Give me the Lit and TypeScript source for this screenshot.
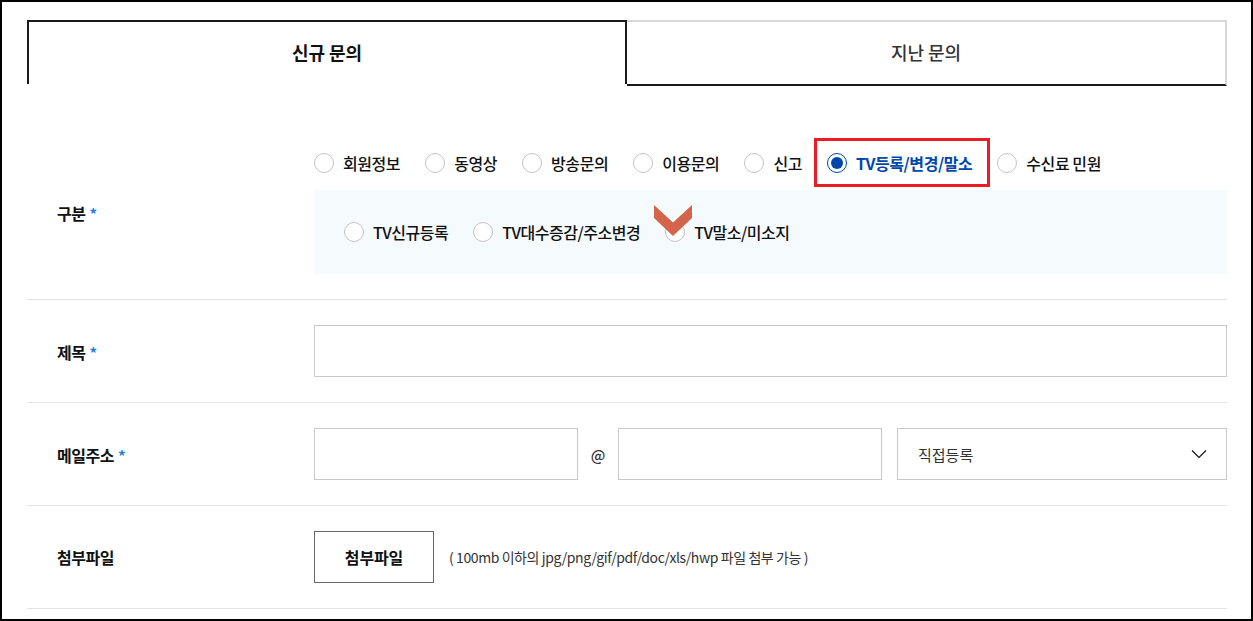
import { LitElement, html, css } from "lit";
import { customElement } from "lit/decorators.js";

@customElement("app-root")
export class AppRoot extends LitElement {
  static styles = css`
    :host {
      display: block;
      width: 1253px;
      height: 621px;
      overflow: hidden;
      font-family: "Noto Sans CJK KR", "Noto Sans", sans-serif;
      color: #111;
    }
    .page {
      box-sizing: border-box;
      width: 1253px;
      height: 621px;
      border: 2px solid #000;
      padding: 18px 24px 0 25px;
      background: #fff;
      overflow: hidden;
    }
    .tabs {
      display: flex;
      height: 66px;
      margin-bottom: 67px;
    }
    .tab {
      box-sizing: border-box;
      width: 600px;
      display: flex;
      align-items: center;
      justify-content: center;
      font-size: 18px;
      letter-spacing: -0.1px;
    }
    .tab.on {
      border: 2px solid #1a1a1a;
      border-bottom: 0;
      font-weight: 700;
      height: 64px;
      padding-bottom: 3px;
    }
    .tab.off {
      border-top: 2px solid #d8d8d8;
      border-right: 2px solid #d8d8d8;
      border-bottom: 2px solid #1a1a1a;
      font-weight: 500;
      color: #333;
      padding-bottom: 2px;
    }
    .row {
      display: grid;
      grid-template-columns: 287px 913px;
      align-items: center;
      border-bottom: 1px solid #e5e5e5;
      padding: 25px 0;
    }
    .row.first {
      padding-top: 0;
    }
    .label {
      padding: 2px 0 0 30px;
      font-size: 16px;
      font-weight: 700;
      letter-spacing: -0.5px;
      line-height: 22px;
    }
    .row.first .label,
    .row.last .label {
      padding-top: 0;
    }
    .star {
      color: #1e80e0;
      font-size: 15px;
      margin-left: 1px;
    }
    .field {
      position: relative;
    }
    .radios {
      display: flex;
      align-items: center;
      gap: 25px;
      height: 20px;
    }
    .radio {
      display: flex;
      align-items: center;
      gap: 9px;
      font-size: 16px;
      font-weight: 500;
      line-height: 20px;
      letter-spacing: -0.43px;
      white-space: nowrap;
    }
    .panel .radio {
      letter-spacing: -0.48px;
    }
    .dot {
      box-sizing: border-box;
      width: 20px;
      height: 20px;
      border: 1px solid #c4c4c4;
      border-radius: 50%;
      background: #fff;
      flex: none;
    }
    .radio.sel {
      color: #0047ab;
      font-weight: 700;
    }
    .radio.sel .dot {
      border-color: #0047ab;
      padding: 3px;
    }
    .radio.sel .dot::after {
      content: "";
      display: block;
      width: 12px;
      height: 12px;
      border-radius: 50%;
      background: #0047ab;
    }
    .panel {
      position: relative;
      margin-top: 17px;
      height: 84px;
      padding-left: 30px;
      background: #f5fafd;
      display: flex;
      align-items: center;
    }
    .panel .radios {
      margin-top: -1px;
    }
    .redbox {
      position: absolute;
      left: 500px;
      top: -15px;
      width: 176px;
      height: 49px;
      box-sizing: border-box;
      border: 3px solid #ed1c24;
    }
    .chevron {
      position: absolute;
      left: 340px;
      top: 15px;
      width: 38px;
      height: 31px;
      display: block;
    }
    .input {
      box-sizing: border-box;
      height: 52px;
      border: 1px solid #c8c8c8;
      background: #fff;
    }
    .mail {
      display: flex;
      align-items: center;
    }
    .mail .input {
      width: 264px;
    }
    .at {
      width: 40px;
      text-align: center;
      font-size: 15px;
      color: #333;
      font-weight: 500;
    }
    .select {
      box-sizing: border-box;
      width: 330px;
      height: 52px;
      margin-left: 15px;
      border: 1px solid #c8c8c8;
      display: flex;
      align-items: center;
      justify-content: space-between;
      padding: 0 19px 0 20px;
      font-size: 15px;
      color: #333;
    }
    .select svg {
      display: block;
      width: 16px;
      height: 10px;
    }
    .file {
      display: flex;
      align-items: center;
    }
    .btn {
      box-sizing: border-box;
      width: 120px;
      height: 52px;
      border: 1px solid #666;
      display: flex;
      align-items: center;
      justify-content: center;
      font-size: 16px;
      font-weight: 700;
      letter-spacing: -0.15px;
    }
    .hint {
      margin-left: 15px;
      font-size: 14px;
      letter-spacing: -0.41px;
      color: #333;
    }
  `;

  private radio(text: string, sel = false) {
    return html`<div class="radio ${sel ? "sel" : ""}"><span class="dot"></span>${text}</div>`;
  }

  render() {
    return html`
      <div class="page">
        <div class="tabs">
          <div class="tab on">신규 문의</div>
          <div class="tab off">지난 문의</div>
        </div>
        <div class="row first">
          <div class="label">구분 <span class="star">*</span></div>
          <div class="field">
            <div class="radios">
              ${this.radio("회원정보")} ${this.radio("동영상")} ${this.radio("방송문의")}
              ${this.radio("이용문의")} ${this.radio("신고")}
              ${this.radio("TV등록/변경/말소", true)} ${this.radio("수신료 민원")}
            </div>
            <div class="redbox"></div>
            <div class="panel">
              <div class="radios">
                ${this.radio("TV신규등록")} ${this.radio("TV대수증감/주소변경")}
                ${this.radio("TV말소/미소지")}
              </div>
              <svg class="chevron" viewBox="0 0 38 31">
                <path d="M0 0 L19 17.5 L38 0 V13 L19 31 L0 13 Z" fill="#d4654a" />
              </svg>
            </div>
          </div>
        </div>
        <div class="row">
          <div class="label">제목 <span class="star">*</span></div>
          <div class="input"></div>
        </div>
        <div class="row">
          <div class="label">메일주소 <span class="star">*</span></div>
          <div class="mail">
            <div class="input"></div>
            <div class="at">@</div>
            <div class="input"></div>
            <div class="select">
              직접등록
              <svg viewBox="0 0 16 10"><path d="M1 1.5 L8 8.5 L15 1.5" fill="none" stroke="#111" stroke-width="1.2" /></svg>
            </div>
          </div>
        </div>
        <div class="row last">
          <div class="label">첨부파일</div>
          <div class="file">
            <div class="btn">첨부파일</div>
            <div class="hint">( 100mb 이하의 jpg/png/gif/pdf/doc/xls/hwp 파일 첨부 가능 )</div>
          </div>
        </div>
      </div>
    `;
  }
}
